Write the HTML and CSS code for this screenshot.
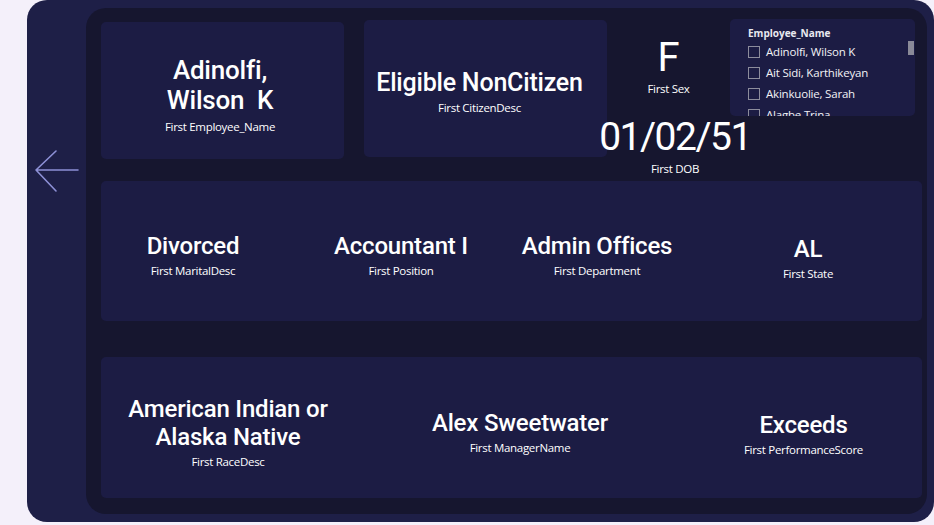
FILE: index.html
```html
<!DOCTYPE html>
<html lang="en">
<head>
<meta charset="utf-8">
<title>Employee Details</title>
<link rel="stylesheet" href="styles.css">
</head>
<body>
<div class="page">
  <div class="outer">
    <div class="nav">
      <svg class="back" width="50" height="50" viewBox="0 0 50 50" aria-hidden="true">
        <path d="M6 25 H48 M26 6 L6 25 L26 46" fill="none" stroke="#8d90d6" stroke-width="1.6" stroke-linecap="round" stroke-linejoin="round"/>
      </svg>
    </div>
    <div class="inner">
      <div class="top-row">
        <div class="card card-name">
          <div class="kpi">
            <div class="value value-name">Adinolfi,<br>Wilson&nbsp;&nbsp;K</div>
            <div class="label">First Employee_Name</div>
          </div>
        </div>
        <div class="card card-citizen">
          <div class="kpi">
            <div class="value value-citizen">Eligible NonCitizen</div>
            <div class="label">First CitizenDesc</div>
          </div>
        </div>
        <div class="side">
          <div class="side-top">
            <div class="sex">
              <div class="big">F</div>
              <div class="label label-tight">First Sex</div>
            </div>
            <div class="slicer">
              <div class="slicer-title">Employee_Name</div>
              <ul class="slicer-list">
                <li><span class="box"></span>Adinolfi, Wilson K</li>
                <li><span class="box"></span>Ait Sidi, Karthikeyan</li>
                <li><span class="box"></span>Akinkuolie, Sarah</li>
                <li><span class="box"></span>Alagbe,Trina</li>
              </ul>
              <div class="scroll-thumb"></div>
            </div>
          </div>
          <div class="dob">
            <div class="big big-date">01/02/51</div>
            <div class="label label-dob">First DOB</div>
          </div>
        </div>
      </div>

      <div class="card row row-two">
        <div class="kpi">
          <div class="value">Divorced</div>
          <div class="label">First MaritalDesc</div>
        </div>
        <div class="kpi">
          <div class="value">Accountant I</div>
          <div class="label">First Position</div>
        </div>
        <div class="kpi">
          <div class="value">Admin Offices</div>
          <div class="label">First Department</div>
        </div>
        <div class="kpi kpi-state">
          <div class="value">AL</div>
          <div class="label">First State</div>
        </div>
      </div>

      <div class="card row row-three">
        <div class="kpi">
          <div class="value">American Indian or<br>Alaska Native</div>
          <div class="label">First RaceDesc</div>
        </div>
        <div class="kpi">
          <div class="value">Alex Sweetwater</div>
          <div class="label">First ManagerName</div>
        </div>
        <div class="kpi kpi-perf">
          <div class="value">Exceeds</div>
          <div class="label">First PerformanceScore</div>
        </div>
      </div>
    </div>
  </div>
</div>
</body>
</html>
```

FILE: styles.css
```css
* { box-sizing: border-box; }

html, body {
  margin: 0;
  padding: 0;
  background: #f4f0fa;
  width: 934px;
  height: 525px;
  overflow: hidden;
}

body {
  font-family: "Open Sans", "Noto Sans", sans-serif;
  color: #ffffff;
}

.page {
  padding-left: 27px;
}

.outer {
  width: 907px;
  height: 522px;
  background: #1e1f47;
  border-radius: 20px;
  display: flex;
  padding: 8px 7px 8px 0;
}

.nav {
  width: 59px;
  flex: none;
}

.back {
  display: block;
  margin-top: 137px;
  margin-left: 3px;
}

.inner {
  flex: 1;
  background: #16162f;
  border-radius: 20px;
  padding: 12px 5px 16px 15px;
  display: flex;
  flex-direction: column;
}

.card {
  background: #1c1c44;
  border-radius: 5px;
}

.top-row {
  display: flex;
  height: 161px;
  align-items: flex-start;
}

.card-name {
  width: 243px;
  height: 137px;
  margin-top: 2px;
  display: flex;
  align-items: center;
  justify-content: center;
  padding: 7px 5px 0 0;
}

.card-citizen {
  width: 243px;
  height: 137px;
  margin-left: 20px;
  display: flex;
  align-items: center;
  justify-content: center;
  padding: 6px 12px 0 0;
}

.kpi {
  display: flex;
  flex-direction: column;
  align-items: center;
  text-align: center;
}

.value {
  font-family: Roboto, "DejaVu Sans", sans-serif;
  font-weight: 500;
  font-size: 24px;
  line-height: 28px;
  letter-spacing: -0.2px;
  white-space: nowrap;
}

.value-name {
  font-size: 26px;
  line-height: 30px;
  margin-bottom: 4px;
}

.value-citizen {
  font-size: 25px;
  line-height: 30px;
  margin-bottom: 2px;
}

.label {
  font-family: "Open Sans", "Noto Sans", sans-serif;
  font-size: 11.5px;
  line-height: 15px;
  letter-spacing: -0.3px;
  margin-top: 3px;
  white-space: nowrap;
}

.value-name + .label,
.value-citizen + .label {
  margin-top: 0;
}

.side {
  width: 308px;
  display: flex;
  flex-direction: column;
}

.side-top {
  display: flex;
  align-items: flex-start;
}

.sex {
  width: 123px;
  margin-top: 16px;
  display: flex;
  flex-direction: column;
  align-items: center;
}

.big {
  font-family: Roboto, "DejaVu Sans", sans-serif;
  font-weight: 400;
  font-size: 40px;
  line-height: 44px;
  white-space: nowrap;
}

.label-tight {
  margin-top: 1px;
}

.big-date {
  font-size: 39px;
  letter-spacing: -1.5px;
}

.dob {
  width: 136px;
  margin-top: -1px;
  display: flex;
  flex-direction: column;
  align-items: center;
}

.label-dob {
  margin-top: 2px;
}

.slicer {
  position: relative;
  width: 185px;
  height: 97px;
  margin-top: -1px;
  background: #1c1c44;
  border-radius: 5px;
  overflow: hidden;
  padding: 7px 0 0 18px;
}

.slicer-title {
  font-size: 10px;
  font-weight: 700;
  line-height: 14px;
  color: #e8e8f0;
  margin-bottom: 1px;
}

.slicer-list {
  list-style: none;
  margin: 0;
  padding: 0;
}

.slicer-list li {
  display: flex;
  align-items: center;
  height: 21px;
  font-size: 11.5px;
  letter-spacing: -0.2px;
  color: #f2f2f6;
  white-space: nowrap;
}

.box {
  width: 12px;
  height: 12px;
  border: 1px solid #8c8c9c;
  margin-right: 6px;
  flex: none;
}

.scroll-thumb {
  position: absolute;
  right: 1px;
  top: 22px;
  width: 6px;
  height: 14px;
  background: #8a8a98;
}

.row {
  display: grid;
  align-items: center;
  justify-items: center;
  padding-top: 8px;
}

.row-two {
  height: 140px;
  grid-template-columns: 184px 232px 160px 1fr;
}

.kpi-state {
  padding-left: 17px;
  margin-top: 6px;
}

.row-three {
  height: 141px;
  margin-top: 36px;
  grid-template-columns: 254px 330px 1fr;
}

.kpi-perf {
  margin-top: 4px;
}
```
